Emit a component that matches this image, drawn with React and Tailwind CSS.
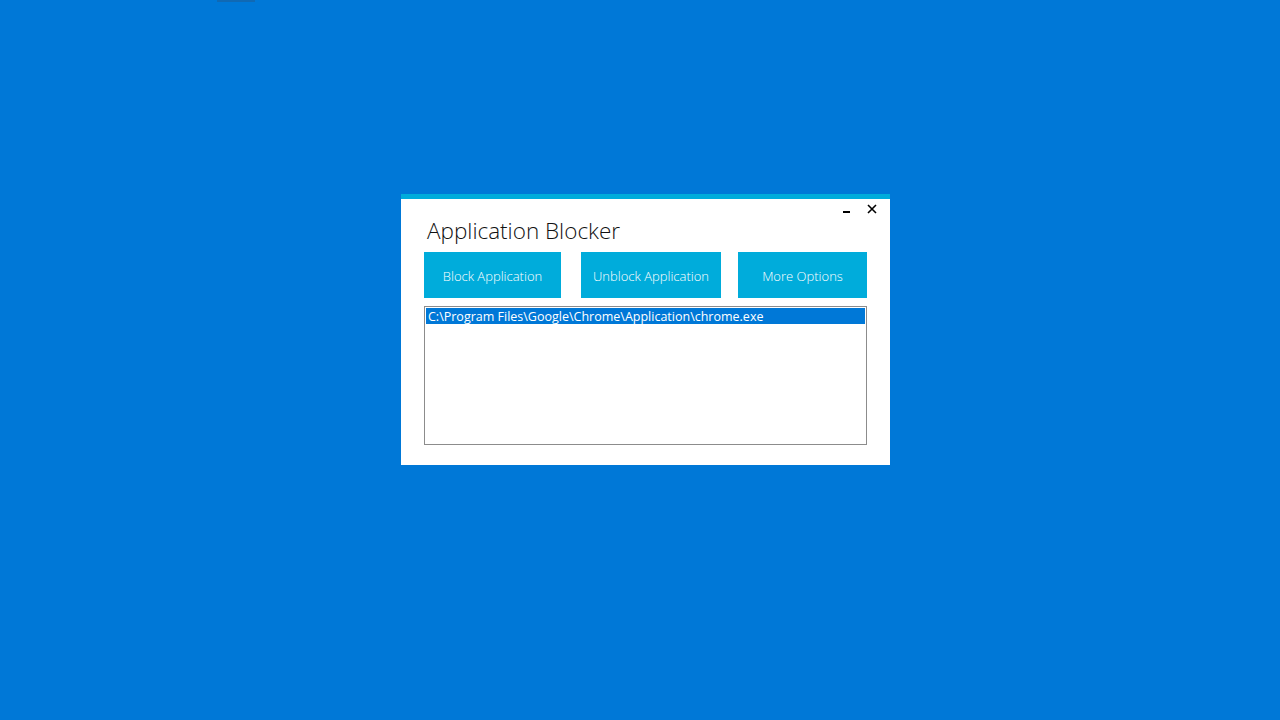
export default function App() {
  const font = { fontFamily: '"Open Sans", "Noto Sans", sans-serif' };
  return (
    <div className="w-[1280px] h-[720px] bg-[#0078d7] overflow-hidden relative" style={font}>
      <div className="absolute left-[217px] top-0 w-[38px] h-[2px] bg-[#1a5f9c] opacity-60" />
      <div className="pt-[194px] pl-[401px]">
        <div className="w-[489px] h-[271px] bg-white border-t-[5px] border-[#00acdb] flex flex-col pl-[23px] pr-[23px]">
          <div className="relative h-[53px]">
            <div className="absolute left-[3px] top-[17px] text-[22.5px] leading-[30px] font-light text-[#111]">
              Application Blocker
            </div>
            <div className="absolute right-[-10px] top-[5px] flex items-start">
              <div className="w-[7px] h-[2px] bg-black mt-[7px] mr-[17px]" />
              <svg width="10" height="10" viewBox="0 0 10 10" className="mt-[0px]">
                <path d="M1 1 L9 9 M9 1 L1 9" stroke="#000" strokeWidth="1.6" />
              </svg>
            </div>
          </div>
          <div className="flex h-[46px]">
            <button className="w-[137px] h-[46px] pt-[4px] bg-[#00acdb] text-white text-[13px] font-light">Block Application</button>
            <button className="ml-[20px] w-[140px] h-[46px] pt-[4px] bg-[#00acdb] text-white text-[13px] font-light">Unblock Application</button>
            <button className="ml-[17px] w-[129px] h-[46px] pt-[4px] bg-[#00acdb] text-white text-[13px] font-light">More Options</button>
          </div>
          <div className="mt-[8px] w-[443px] h-[139px] border border-[#8c8c8c] p-[1px]">
            <div className="h-[16px] bg-[#0078d7] text-white text-[12.5px] leading-[18px] pl-[2px] whitespace-nowrap overflow-hidden">
              C:\Program Files\Google\Chrome\Application\chrome.exe
            </div>
          </div>
        </div>
      </div>
    </div>
  );
}
